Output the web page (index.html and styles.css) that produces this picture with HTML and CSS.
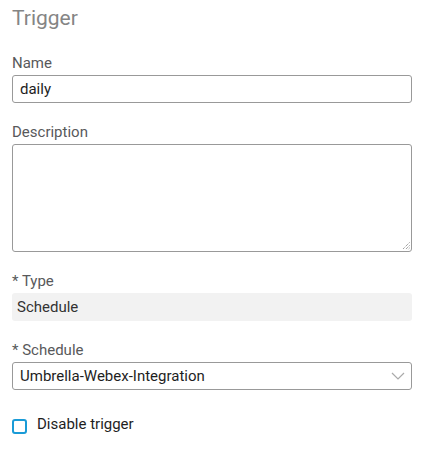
FILE: index.html
```html
<!DOCTYPE html>
<html lang="en">
<head>
<meta charset="utf-8">
<title>Trigger</title>
<link rel="stylesheet" href="styles.css">
</head>
<body>
<div class="page">
  <h1 class="title">Trigger</h1>
  <div class="field">
    <label class="label">Name</label>
    <div class="input">daily</div>
  </div>
  <div class="field">
    <label class="label">Description</label>
    <div class="textarea">
      <svg class="grip" width="8" height="8" viewBox="0 0 8 8"><path d="M7.5 0.5 L0.5 7.5 M7.5 3.5 L3.5 7.5 M7.5 6 L6 7.5" stroke="#777" stroke-width="1" stroke-dasharray="1 1" fill="none"/></svg>
    </div>
  </div>
  <div class="field">
    <label class="label">* Type</label>
    <div class="readonly">Schedule</div>
  </div>
  <div class="field">
    <label class="label">* Schedule</label>
    <div class="select">
      <span>Umbrella-Webex-Integration</span>
      <svg class="chev" width="14" height="8" viewBox="0 0 14 8"><path d="M1 1 L7 7 L13 1" stroke="#aaa" stroke-width="1.2" fill="none"/></svg>
    </div>
  </div>
  <div class="check-row">
    <span class="checkbox"></span>
    <span class="check-label">Disable trigger</span>
  </div>
</div>
</body>
</html>
```
FILE: styles.css
```css
html, body {
  margin: 0;
  padding: 0;
  background: #fff;
}
.page {
  font-family: Roboto, "Liberation Sans", sans-serif;
  padding: 6px 20px 0 12px;
  width: 400px;
}
.title {
  margin: 0 0 23px 0;
  font-size: 21px;
  line-height: 24px;
  font-weight: 400;
  color: #858585;
}
.field {
  display: flex;
  flex-direction: column;
  margin-bottom: 19px;
}
.label {
  font-size: 15px;
  line-height: 20px;
  color: #58595b;
  margin-bottom: 2px;
}
.input, .select {
  box-sizing: border-box;
  height: 28px;
  border: 1px solid #999;
  border-radius: 3px;
  padding: 0 7px;
  font-size: 15px;
  line-height: 26px;
  color: #1e1e1e;
}
.textarea {
  box-sizing: border-box;
  height: 108px;
  border: 1px solid #999;
  border-radius: 3px;
  position: relative;
}
.grip {
  position: absolute;
  right: 1px;
  bottom: 1px;
}
.readonly {
  box-sizing: border-box;
  height: 28px;
  background: #f2f2f2;
  border-radius: 3px;
  padding: 0 5px;
  font-size: 15px;
  line-height: 28px;
  color: #333;
}
.select {
  display: flex;
  align-items: center;
  justify-content: space-between;
  padding-right: 6px;
}
.check-row {
  display: flex;
  align-items: flex-start;
  gap: 10px;
  margin-top: 24px;
}
.checkbox {
  box-sizing: border-box;
  width: 15px;
  height: 15px;
  border: 2.5px solid #1a9bd7;
  border-radius: 3px;
  margin-top: 5px;
}
.check-label {
  font-size: 15px;
  line-height: 20px;
  color: #1e1e1e;
}
```
